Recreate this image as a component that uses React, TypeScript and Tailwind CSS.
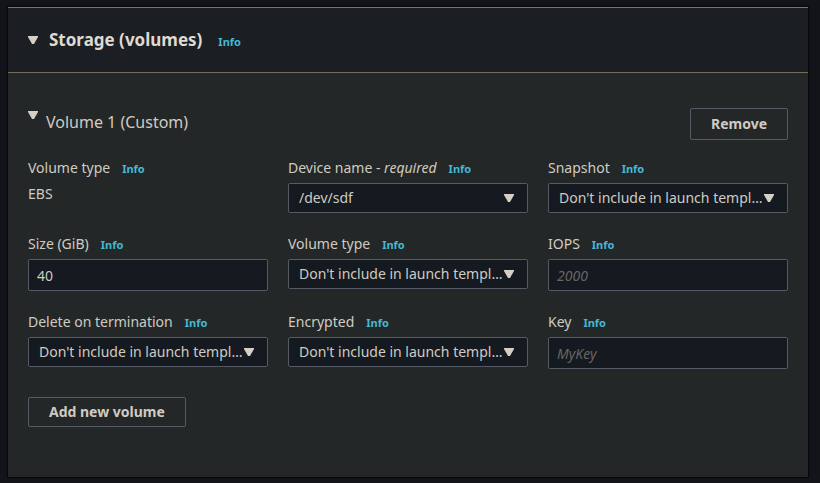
import { useId, type ReactNode } from "react";

function Caret({ className = "" }: { className?: string }) {
  return (
    <svg
      className={`h-2 w-2.5 shrink-0 fill-[#d5cfc5] ${className}`}
      viewBox="0 0 10 8"
      aria-hidden="true"
    >
      <path d="M0 0h10v1L6 8H4L0 1z" />
    </svg>
  );
}

function InfoLink() {
  return (
    <a href="#info" className="text-[11px] font-bold text-[#44b9d6] hover:underline">
      Info
    </a>
  );
}

function Field({ label, id, children }: { label: ReactNode; id?: string; children: ReactNode }) {
  return (
    <div className="min-w-0">
      <div className="mb-1 flex h-[22px] items-baseline gap-3 leading-[22px]">
        {id ? <label htmlFor={id}>{label}</label> : <span>{label}</span>}
        <InfoLink />
      </div>
      {children}
    </div>
  );
}

function SelectField({ label, value }: { label: ReactNode; value: string }) {
  const id = useId();
  return (
    <Field label={label} id={id}>
      <div className="relative">
        <select
          id={id}
          defaultValue={value}
          className="block h-[30px] w-full appearance-none truncate rounded-xs border border-[#545b64] bg-[#151920] pr-6 pl-2.5"
        >
          <option value={value}>{value}</option>
        </select>
        <Caret className="pointer-events-none absolute top-[11px] right-3.5" />
      </div>
    </Field>
  );
}

function TextField({ label, ...input }: { label: string; defaultValue?: string; placeholder?: string }) {
  const id = useId();
  return (
    <Field label={label} id={id}>
      <input
        id={id}
        type="text"
        className="block h-8 w-full rounded-xs border border-[#545b64] bg-[#151920] px-2 placeholder:text-[#666665] placeholder:italic"
        {...input}
      />
    </Field>
  );
}

const SKIP = "Don't include in launch template";

export default function App() {
  return (
    <main className="min-h-screen bg-[#13131a] pt-[7px] pr-3 pb-1.5 pl-2 font-['Noto_Sans',sans-serif] text-sm text-[#d0cbc2]">
      <section className="border-t border-[#7c766c] bg-[#232727] shadow-[0_0_1px_1px_#07080b]">
        <header className="flex h-[65px] items-center border-b border-[#766b5d] bg-[#1b1e22] px-5">
          <button type="button" aria-label="Toggle storage" className="mr-[11px]">
            <Caret />
          </button>
          <div className="flex items-baseline gap-4">
            <h2 className="text-[17px] font-bold text-[#dfdad1]">Storage (volumes)</h2>
            <InfoLink />
          </div>
        </header>

        <div className="px-5 pt-[35px] pb-[50px]">
          <div className="mb-[17px] flex items-start justify-between">
            <button type="button" className="flex items-start gap-2 text-base leading-7">
              <Caret className="mt-[3px]" />
              Volume 1 (Custom)
            </button>
            <button type="button" className="h-8 rounded-xs border border-[#545b64] px-5 font-bold">
              Remove
            </button>
          </div>

          <div className="grid grid-cols-3 gap-5">
            <Field label="Volume type">
              <p className="leading-[22px]">EBS</p>
            </Field>
            <SelectField label={<>Device name - <i>required</i></>} value="/dev/sdf" />
            <SelectField label="Snapshot" value={SKIP} />
            <TextField label="Size (GiB)" defaultValue="40" />
            <SelectField label="Volume type" value={SKIP} />
            <TextField label="IOPS" placeholder="2000" />
            <SelectField label="Delete on termination" value={SKIP} />
            <SelectField label="Encrypted" value={SKIP} />
            <TextField label="Key" placeholder="MyKey" />
          </div>

          <button type="button" className="mt-7 h-[30px] rounded-xs border border-[#545b64] px-5 font-bold">
            Add new volume
          </button>
        </div>
      </section>
    </main>
  );
}
